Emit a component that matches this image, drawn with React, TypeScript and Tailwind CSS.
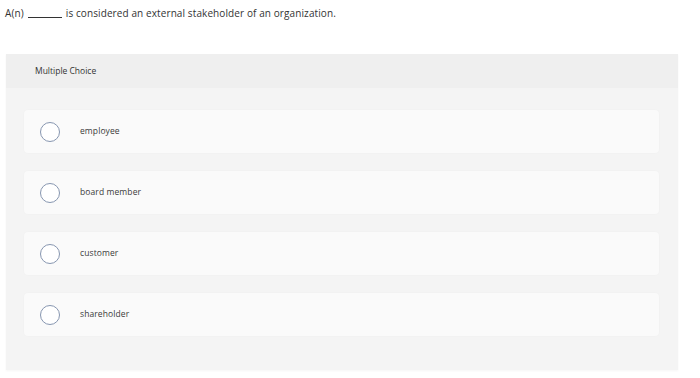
const options = ['employee', 'board member', 'customer', 'shareholder']

function OptionRow({ label }: { label: string }) {
  return (
    <div className="flex h-[43px] items-center rounded-sm bg-[#fafafa] pl-[16px] shadow-[0_0_2px_rgba(0,0,0,0.03)]">
      <span className="h-[20px] w-[20px] shrink-0 rounded-full border-[1.5px] border-[#8796b0] bg-white" />
      <span className="ml-[20px] text-[8.5px] tracking-[0.1px] text-[#3a3a3a]">{label}</span>
    </div>
  )
}

export default function App() {
  return (
    <div className="h-[378px] w-[700px] bg-white font-['Open_Sans',sans-serif]">
      <div className="flex items-center pl-[5px] pt-[6px] text-[10px] leading-[14px] tracking-[0.1px] text-[#333]">
        <span>A(n)</span>
        <span className="ml-[4px] mt-[9px] h-px w-[34px] bg-[#333]" />
        <span className="ml-[4px]">is considered an external stakeholder of an organization.</span>
      </div>

      <div className="ml-[6px] mt-[34px] w-[672px] bg-[#f4f4f4] shadow-[0_1px_2px_rgba(0,0,0,0.04)]">
        <div className="flex h-[34px] items-center bg-[#efefef] pl-[29px] text-[8.5px] text-[#333]">
          Multiple Choice
        </div>
        <div className="flex flex-col gap-[18px] pb-[34px] pl-[18px] pr-[19px] pt-[22px]">
          {options.map((o) => (
            <OptionRow key={o} label={o} />
          ))}
        </div>
      </div>
    </div>
  )
}
